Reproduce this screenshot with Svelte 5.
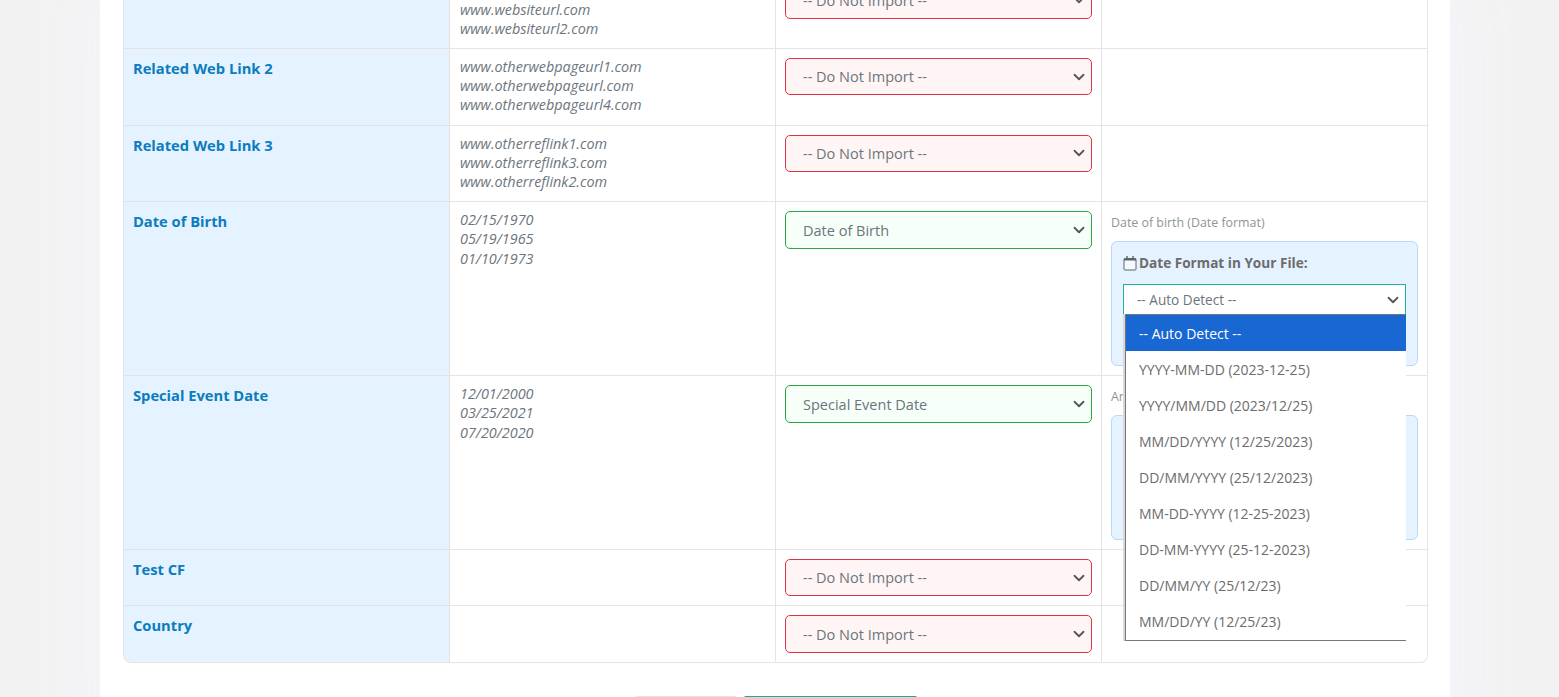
<script>
  const formats = [
    '-- Auto Detect --',
    'YYYY-MM-DD (2023-12-25)',
    'YYYY/MM/DD (2023/12/25)',
    'MM/DD/YYYY (12/25/2023)',
    'DD/MM/YYYY (25/12/2023)',
    'MM-DD-YYYY (12-25-2023)',
    'DD-MM-YYYY (25-12-2023)',
    'DD/MM/YY (25/12/23)',
    'MM/DD/YY (12/25/23)'
  ];
  const rows = [
    { label: 'Related Web Link', samples: ['www.websiteurl1.com', 'www.websiteurl.com', 'www.websiteurl2.com'], map: '' },
    { label: 'Related Web Link 2', samples: ['www.otherwebpageurl1.com', 'www.otherwebpageurl.com', 'www.otherwebpageurl4.com'], map: '' },
    { label: 'Related Web Link 3', samples: ['www.otherreflink1.com', 'www.otherreflink3.com', 'www.otherreflink2.com'], map: '' },
    { label: 'Date of Birth', samples: ['02/15/1970', '05/19/1965', '01/10/1973'], map: 'Date of Birth', note: 'Date of birth (Date format)', open: true },
    { label: 'Special Event Date', samples: ['12/01/2000', '03/25/2021', '07/20/2020'], map: 'Special Event Date', note: 'Anniversary (Date format)' },
    { label: 'Test CF', samples: [], map: '' },
    { label: 'Country', samples: [], map: '' }
  ];
</script>

<div class="page">
  <main class="card">
    <section class="table">
      {#each rows as row}
        <div class="row">
          <div class="cell head">{row.label}</div>
          <div class="cell samples">
            {#each row.samples as s}<div>{s}</div>{/each}
          </div>
          <div class="cell">
            <select class="map" class:ok={row.map} class:bad={!row.map}>
              <option>{row.map || '-- Do Not Import --'}</option>
            </select>
          </div>
          <div class="cell">
            {#if row.note}
              <div class="note">{row.note}</div>
              <div class="panel">
                <div class="title">
                  <svg class="cal" viewBox="0 0 14 15" width="14" height="15" aria-hidden="true">
                    <rect x="1" y="2.5" width="12" height="11.5" rx="1" fill="#f4f9ff" stroke="#5f6666" stroke-width="1"/>
                    <rect x="1" y="2.5" width="12" height="2" fill="#5f6666"/>
                    <path d="M4 0v3.5M10 0v3.5" stroke="#5f6666" stroke-width="1.4" fill="none"/>
                  </svg>
                  Date Format in Your File:
                </div>
                <div class="fmt">
                  <select class="format"><option>-- Auto Detect --</option></select>
                  {#if row.open}
                    <ul class="menu">
                      {#each formats as f, i}
                        <li class:sel={i === 0}>{f}</li>
                      {/each}
                    </ul>
                  {/if}
                </div>
              </div>
            {/if}
          </div>
        </div>
      {/each}
    </section>
    <div class="actions">
      <button class="back">Back</button>
      <button class="next">Continue Import</button>
    </div>
  </main>
</div>

<style>
  :global(body) {
    margin: 0;
    background: #f2f2f2;
    font-family: "Open Sans", "Liberation Sans", sans-serif;
    overflow: hidden;
  }
  .page {
    height: 697px;
    overflow: hidden;
    padding: 0 109px 0 100px;
    box-sizing: border-box;
  }
  .card {
    background: #fff;
    padding: 0 22px 0 23px;
    margin-top: -27.6px;
    box-shadow: 0 0 80px #f6f6fe;
  }
  .table {
    border: 1px solid #e4e4e4;
    border-top: 0;
    border-radius: 0 0 8px 8px;
    overflow: hidden;
  }
  .row {
    display: grid;
    grid-template-columns: 326px 326px 326px 1fr;
  }
  .cell {
    padding: 9px;
    border-bottom: 1px solid #e4e4e4;
    border-right: 1px solid #e4e4e4;
    box-sizing: border-box;
    min-width: 0;
  }
  .row:last-child .cell { border-bottom: 0; }
  .cell:last-child { border-right: 0; }
  .head {
    background: #e5f2ff;
    color: #0b7cbd;
    font-weight: 700;
    font-size: 14.7px;
    line-height: 21px;
  }
  .samples {
    padding: 8px 9px 10px 10px;
    font-style: italic;
    font-size: 14.4px;
    line-height: 19.2px;
    color: #6c757d;
  }
  .map {
    display: block;
    width: 100%;
    height: 37.2px;
    box-sizing: border-box;
    appearance: none;
    padding: 0 36px 0 17px;
    border-radius: 5px;
    border: 1px solid;
    font: 14.5px "Open Sans", sans-serif;
    color: #6c757d;
    background-repeat: no-repeat;
    background-position: right 4px center;
    background-size: 16px 12px;
    background-image: url("data:image/svg+xml,%3csvg xmlns='http://www.w3.org/2000/svg' viewBox='0 0 16 16'%3e%3cpath fill='none' stroke='%23555' stroke-linecap='round' stroke-linejoin='round' stroke-width='2.4' d='m2 5 6 6 6-6'/%3e%3c/svg%3e");
  }
  .bad { border-color: #dc3545; background-color: #fff5f5; }
  .ok { border-color: #28a745; background-color: #f6fff8; height: 37.8px; }
  .note {
    font-size: 12.4px;
    line-height: 15px;
    color: #8d9499;
    margin: 4px 0 11px;
  }
  .panel {
    background: #e5f2ff;
    border: 1px solid #bcd8f8;
    border-radius: 6px;
    padding: 11px;
    height: 125px;
    box-sizing: border-box;
  }
  .title {
    font-size: 13.6px;
    font-weight: 700;
    line-height: 20px;
    color: #6c6c6c;
    display: flex;
    align-items: center;
    gap: 2px;
    margin-bottom: 11px;
  }
  .cal { flex: none; }
  .fmt { position: relative; }
  .format {
    display: block;
    width: 100%;
    height: 31px;
    box-sizing: border-box;
    appearance: none;
    padding: 0 36px 0 13px;
    border: 1px solid #1fb295;
    border-radius: 0;
    font: 13.6px "Open Sans", sans-serif;
    color: #6c757d;
    background: #fff no-repeat right 4px center / 16px 12px;
    background-image: url("data:image/svg+xml,%3csvg xmlns='http://www.w3.org/2000/svg' viewBox='0 0 16 16'%3e%3cpath fill='none' stroke='%23555' stroke-linecap='round' stroke-linejoin='round' stroke-width='2.4' d='m2 5 6 6 6-6'/%3e%3c/svg%3e");
  }
  .menu {
    position: absolute;
    z-index: 5;
    top: 30px;
    left: 2px;
    right: 0;
    margin: 0;
    padding: 0 0 1px;
    list-style: none;
    background: #fff;
    border-top: 1px solid #767676;
    border-left: 1px solid #767676;
    border-bottom: 1px solid #767676;
    box-shadow: -2px 0 0 #d8d8d8;
  }
  .menu li {
    height: 36px;
    line-height: 38px;
    padding-left: 13px;
    font-size: 14px;
    color: #6c6c6c;
  }
  .menu .sel { background: #1967d2; color: #fff; }
  .actions {
    display: flex;
    justify-content: center;
    gap: 5px;
    padding: 33px 0 30px;
  }
  .actions button {
    height: 38px;
    border-radius: 3px;
    font: 14px "Open Sans", sans-serif;
  }
  .back { width: 104px; background: #fff; border: 1px solid #e4e4e4; color: #666; }
  .next { width: 175px; background: #12b28c; border: 1px solid #12b28c; color: #fff; }
</style>
